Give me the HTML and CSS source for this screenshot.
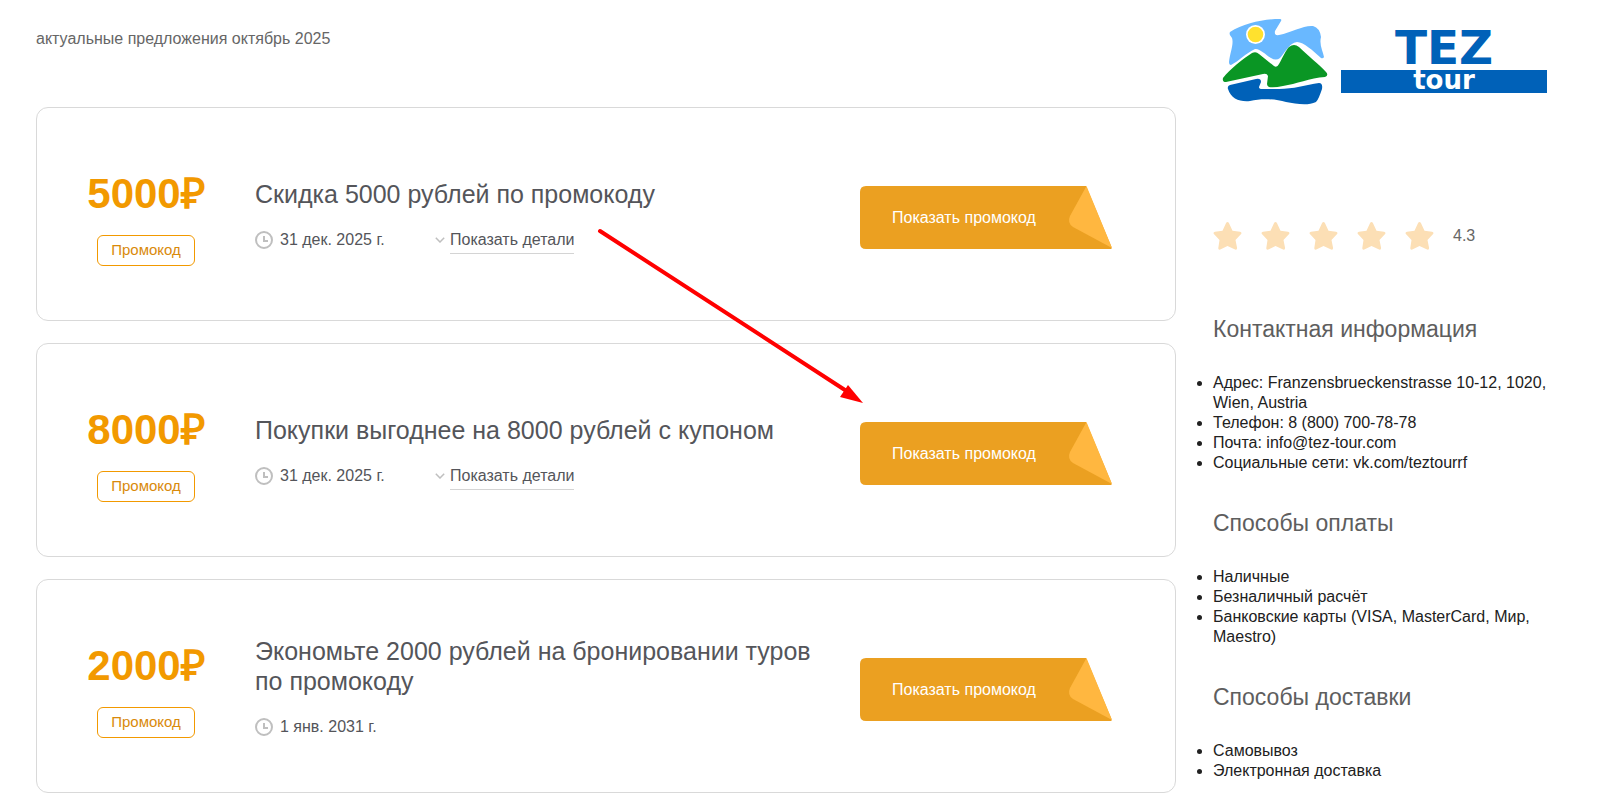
FILE: index.html
```html
<!DOCTYPE html>
<html lang="ru">
<head>
<meta charset="utf-8">
<title>Промокоды TEZ tour</title>
<link rel="stylesheet" href="styles.css">
</head>
<body>
<svg class="defs" aria-hidden="true">
  <symbol id="clock" viewBox="0 0 18 18"><circle cx="9" cy="9" r="8" fill="none" stroke="#bfbfbf" stroke-width="2"/><path d="M9 5v5h4" fill="none" stroke="#bfbfbf" stroke-width="2"/></symbol>
  <symbol id="chevron" viewBox="0 0 10 6"><path d="M.8.8 5 5 9.200.8" fill="none" stroke="#bfbfbf" stroke-width="1.500"/></symbol>
  <symbol id="ribbon" viewBox="0 0 252 63"><path d="M6 0H226L251.500 61V63H6Q0 63 0 57V6Q0 0 6 0Z" fill="#eba021"/><path d="M226.500 0 252 62 213 41Q207 37 210 30Z" fill="#ffb740"/></symbol>
  <symbol id="star" viewBox="0 0 28 28"><path d="M12.700.8Q14-.6 15.300.8L19 8.800 26.500 9.800Q28.700 10.300 27.600 12L22 18 23.600 26Q23.600 28.300 21.600 27.600L14 24 6.800 27.600Q4.600 28.300 4.800 26L6 18 .4 12Q-.7 10.300 1.500 9.800L9 8.800Z" fill="#fcdfb5"/></symbol>
</svg>
<div class="page">
  <main class="offers">
    <p class="intro">актуальные предложения октябрь 2025</p>
    <article class="card">
      <div class="value"><strong class="amount">5000₽</strong><span class="badge">Промокод</span></div>
      <div class="info">
        <h2 class="title">Скидка 5000 рублей по промокоду</h2>
        <div class="meta">
          <span class="date"><svg class="clock"><use href="#clock"/></svg>31 дек. 2025 г.</span>
          <span class="details"><svg class="chevron"><use href="#chevron"/></svg><a class="details-link" href="#">Показать детали</a></span>
        </div>
      </div>
      <button class="show" type="button"><svg class="ribbon"><use href="#ribbon"/></svg><span class="show-label">Показать промокод</span></button>
    </article>
    <article class="card">
      <div class="value"><strong class="amount">8000₽</strong><span class="badge">Промокод</span></div>
      <div class="info">
        <h2 class="title">Покупки выгоднее на 8000 рублей с купоном</h2>
        <div class="meta">
          <span class="date"><svg class="clock"><use href="#clock"/></svg>31 дек. 2025 г.</span>
          <span class="details"><svg class="chevron"><use href="#chevron"/></svg><a class="details-link" href="#">Показать детали</a></span>
        </div>
      </div>
      <button class="show" type="button"><svg class="ribbon"><use href="#ribbon"/></svg><span class="show-label">Показать промокод</span></button>
    </article>
    <article class="card">
      <div class="value"><strong class="amount">2000₽</strong><span class="badge">Промокод</span></div>
      <div class="info">
        <h2 class="title">Экономьте 2000 рублей на бронировании туров по промокоду</h2>
        <div class="meta">
          <span class="date"><svg class="clock"><use href="#clock"/></svg>1 янв. 2031 г.</span>
        </div>
      </div>
      <button class="show" type="button"><svg class="ribbon"><use href="#ribbon"/></svg><span class="show-label">Показать промокод</span></button>
    </article>
  </main>
  <aside class="side">
    <svg class="logo" viewBox="0 0 326 88" role="img" aria-label="TEZ tour">
      <path d="M8 14C22 5 42 1 58 1Q60 1 59 3L53 13Q52 18 57 17C70 14 82 7 91 8Q98 10 99 19C97 27 101 33 102 39Q101 41 99 40C91 33 82 24 75 24C67 25 62 36 58 40Q54 43 49 40C43 36 37 30 33 31C24 35 17 43 9 47Q7 47 7 44C8 35 12 26 10 20C8 17 7 16 8 14Z" fill="#69b8ff"/>
      <circle cx="33.500" cy="16.500" r="9.500" fill="#fff"/><circle cx="33.500" cy="16.500" r="7.800" fill="#ffe12e"/>
      <path d="M1 60C8 51 22 40 30 35Q34 33 37 36L52 48Q55 50 57 46C61 39 64 32 67 29Q72 25 77 29C86 38 97 46 104 54Q107 57 103 59C88 60 74 66 61 68Q52 70 47 69Q45 68 45 66L46 58Q45 55 41 56L4 64Q0 64 1 60Z" fill="#0a9624"/>
      <path d="M8 67 34 61Q39 60 39 64L37 69Q37 71 40 71H57C71 71 84 67 97 65Q101 65 100 71C98 77 96 82 94 84C86 88 74 86 64 84C53 81 40 80 28 83C18 84 9 81 6 71Q5 68 8 67Z" fill="#0061b8"/>
      <text class="logo-name" x="222" y="46" text-anchor="middle">TEZ</text>
      <rect x="119" y="52" width="206" height="23" fill="#0061b8"/>
      <text class="logo-sub" x="222" y="71" text-anchor="middle">tour</text>
    </svg>
    <div class="rating">
      <svg class="star"><use href="#star"/></svg><svg class="star"><use href="#star"/></svg><svg class="star"><use href="#star"/></svg><svg class="star"><use href="#star"/></svg><svg class="star"><use href="#star"/></svg>
      <span>4.3</span>
    </div>
    <h3 class="heading">Контактная информация</h3>
    <ul class="list">
      <li>Адрес: Franzensbrueckenstrasse 10-12, 1020, Wien, Austria</li>
      <li>Телефон: 8 (800) 700-78-78</li>
      <li>Почта: info@tez-tour.com</li>
      <li>Социальные сети: vk.com/teztourrf</li>
    </ul>
    <h3 class="heading">Способы оплаты</h3>
    <ul class="list">
      <li>Наличные</li>
      <li>Безналичный расчёт</li>
      <li>Банковские карты (VISA, MasterCard, Мир, Maestro)</li>
    </ul>
    <h3 class="heading">Способы доставки</h3>
    <ul class="list">
      <li>Самовывоз</li>
      <li>Электронная доставка</li>
    </ul>
  </aside>
  <svg class="arrow" viewBox="0 0 270 180" aria-hidden="true"><path d="M4 5 252 166" stroke="#f00" stroke-width="4" stroke-linecap="round"/><path d="M267 177 252 159 244 171Z" fill="#f00"/></svg>
</div>
</body>
</html>
```

FILE: styles.css
```css
* {
  box-sizing: border-box;
}

body {
  margin: 0;
  background: #fff;
  color: #212121;
  font: 16px/20px "Liberation Sans", Arial, sans-serif;
}

.defs {
  display: none;
}

.page {
  position: relative;
  display: flex;
  gap: 37px;
  padding: 0 55px 15px 36px;
}

.offers {
  flex: 1;
  min-width: 0;
  display: flex;
  flex-direction: column;
  gap: 22px;
}

.intro {
  margin: 0;
  padding: 29px 0 36px;
  color: #666;
}

.card {
  display: flex;
  align-items: center;
  min-height: 214px;
  padding-right: 63px;
  border: 1px solid #d9d9d9;
  border-radius: 12px;
}

.value {
  flex: none;
  width: 218px;
  display: flex;
  flex-direction: column;
  align-items: center;
  gap: 10px;
}

.amount {
  color: #f29900;
  font-size: 42px;
  line-height: 62px;
}

.badge {
  padding: 4px 13px 5px;
  border: 1px solid #f29900;
  border-radius: 6px;
  color: #d98a0b;
  font-size: 15px;
}

.info {
  flex: 1;
  min-width: 0;
  padding-right: 40px;
  color: #54555a;
}

.title {
  margin: 0 0 21px;
  font-size: 25px;
  font-weight: 400;
  line-height: 30px;
}

.meta {
  display: flex;
}

.date {
  display: flex;
  align-items: center;
  gap: 7px;
  width: 180px;
}

.clock {
  width: 18px;
  height: 18px;
}

.details {
  display: flex;
  align-items: center;
  gap: 5px;
  height: 20px;
}

.chevron {
  width: 10px;
  height: 6px;
}

.details-link {
  margin-top: 4px;
  padding-bottom: 3px;
  border-bottom: 1px solid #d4d4d4;
  color: inherit;
  text-decoration: none;
}

.show {
  position: relative;
  flex: none;
  width: 252px;
  height: 63px;
  margin-top: 6px;
  padding: 2px 0 0 32px;
  border: 0;
  background: none;
  color: #fff;
  font: inherit;
  text-align: left;
  cursor: pointer;
}

.ribbon {
  position: absolute;
  inset: 0;
  width: 100%;
  height: 100%;
}

.show-label {
  position: relative;
}

.side {
  flex: none;
  width: 343px;
}

.logo {
  display: block;
  width: 326px;
  height: 88px;
  margin: 18px auto 116px;
}

.logo-name {
  fill: #0061b8;
  font: bold 47px "DejaVu Sans", sans-serif;
}

.logo-sub {
  fill: #fff;
  font: bold 26px "DejaVu Sans", sans-serif;
}

.rating {
  display: flex;
  align-items: center;
  gap: 19px;
  color: #666;
}

.star {
  width: 29px;
  height: 28px;
}

.heading {
  margin: 35px 0 29px;
  color: #5e5e5e;
  font-size: 23px;
  font-weight: 400;
  line-height: 30px;
}

.rating + .heading {
  margin-top: 64px;
}

.list {
  margin: 0;
  padding: 0;
}

.arrow {
  position: absolute;
  left: 596px;
  top: 226px;
  width: 270px;
  height: 180px;
  pointer-events: none;
}
```
